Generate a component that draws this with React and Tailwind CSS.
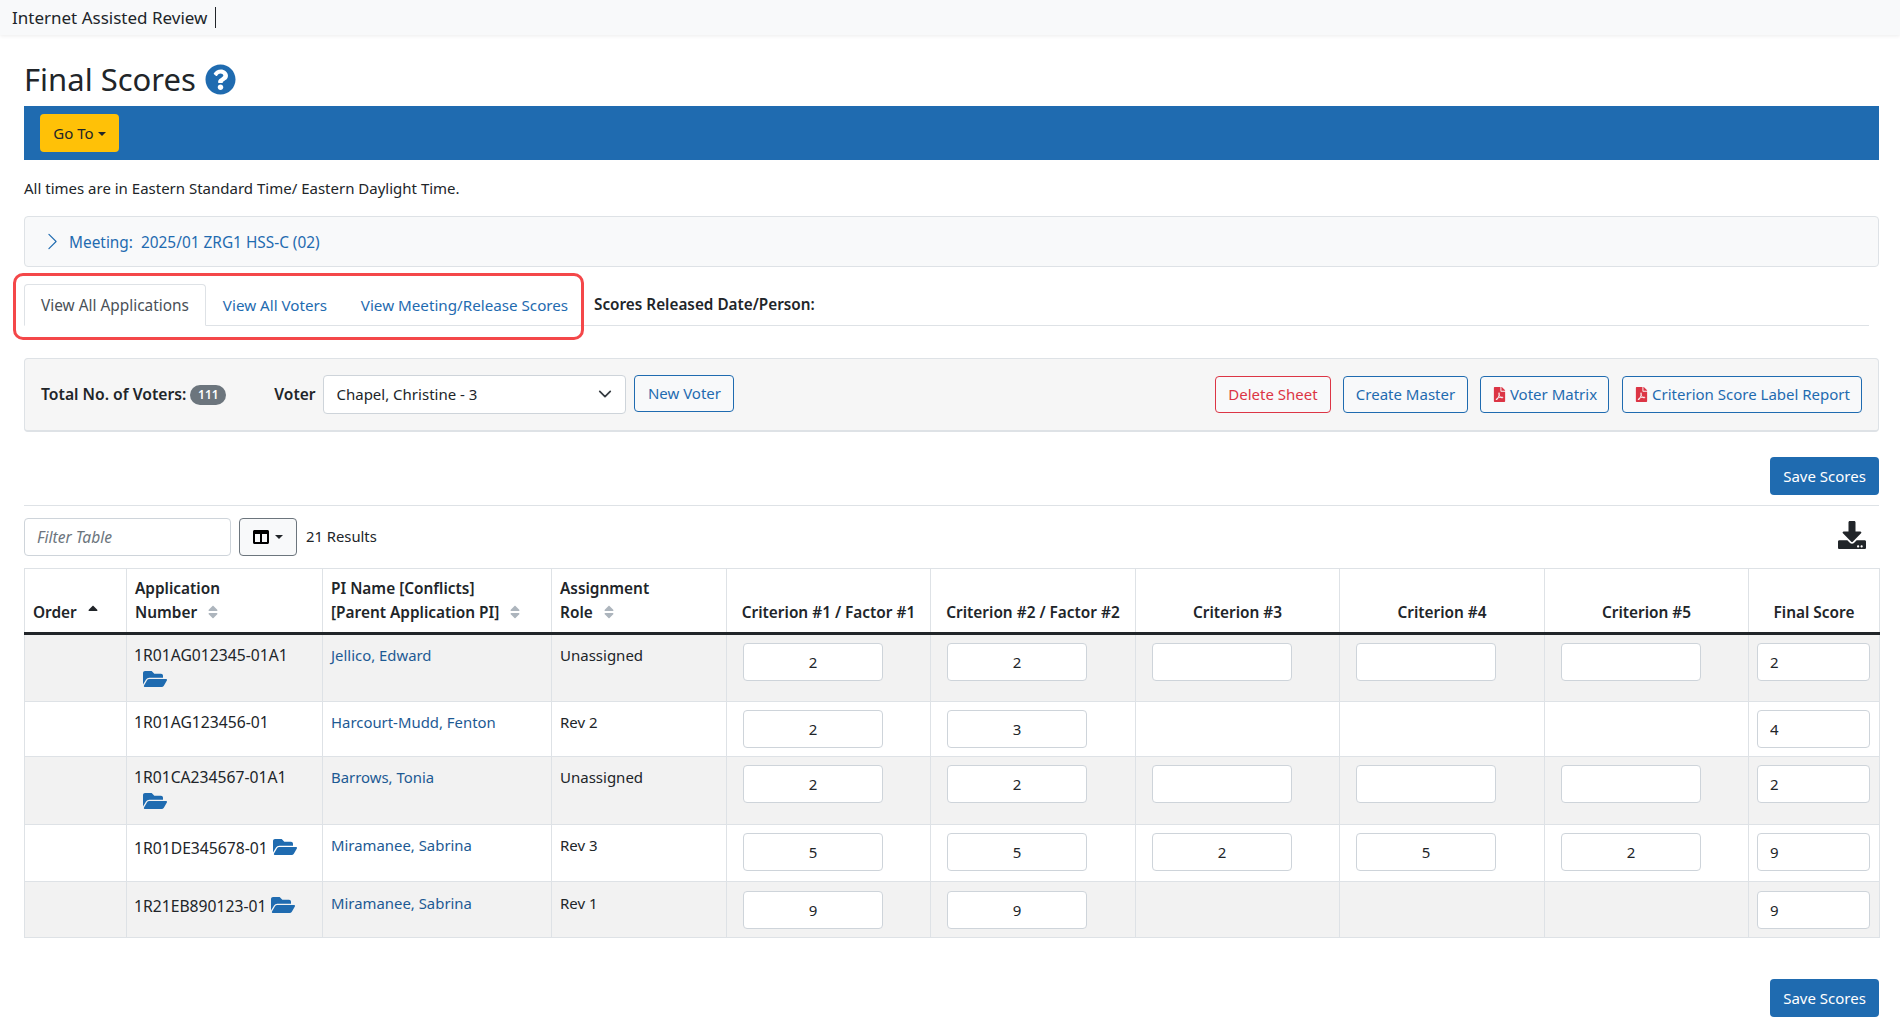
import React from 'react'
import { FaFolderOpen, FaFilePdf, FaQuestionCircle, FaColumns, FaDownload, FaSort, FaSortUp } from 'react-icons/fa'

const widths = [102, 196, 229, 175, 204, 205, 204, 205, 204, 131]

const rows = [
  { app: '1R01AG012345-01A1', folder: 'below', pi: 'Jellico, Edward', role: 'Unassigned', scores: ['2', '2', '', '', ''], final: '2', h: 'h-[68px]', inputs: 5 },
  { app: '1R01AG123456-01', pi: 'Harcourt-Mudd, Fenton', role: 'Rev 2', scores: ['2', '3'], final: '4', h: 'h-[55px]', inputs: 2 },
  { app: '1R01CA234567-01A1', folder: 'below', pi: 'Barrows, Tonia', role: 'Unassigned', scores: ['2', '2', '', '', ''], final: '2', h: 'h-[68px]', inputs: 5 },
  { app: '1R01DE345678-01', folder: 'inline', pi: 'Miramanee, Sabrina', role: 'Rev 3', scores: ['5', '5', '2', '5', '2'], final: '9', h: 'h-[57px]', inputs: 5 },
  { app: '1R21EB890123-01', folder: 'inline', pi: 'Miramanee, Sabrina', role: 'Rev 1', scores: ['9', '9'], final: '9', h: 'h-[56px]', inputs: 2, last: true },
]

function Caret() {
  return <span className="inline-block w-0 h-0 ml-1 align-[3px] border-x-[4px] border-x-transparent border-t-[4px] border-t-current" />
}

function OutlineBtn({ children, className = '' }) {
  return (
    <button className={`h-[37px] border border-[#1f6bb0] rounded text-[#1f6bb0] bg-[#f8f9fa] text-[15px] whitespace-nowrap flex items-center justify-center ${className}`}>
      {children}
    </button>
  )
}

function SaveBtn() {
  return (
    <div className="flex justify-end">
      <button className="w-[109px] h-[38px] rounded bg-[#1f6bb0] text-white text-[15px]">Save Scores</button>
    </div>
  )
}

function Th({ children, sort, center }) {
  return (
    <th className={`border-x border-t border-[#dee2e6] align-bottom px-2 pb-[7px] font-semibold text-[15.4px] leading-[24px] text-[#212529] ${center ? 'text-center' : 'text-left'}`}>
      {children}
      {sort === 'up' && <FaSortUp className="inline ml-2 text-[16px] text-[#212529] align-[-2px]" />}
      {sort === 'both' && <FaSort className="inline ml-2 text-[16px] text-[#adb5bd] align-[-2px]" />}
    </th>
  )
}

function ScoreInput({ value, left }) {
  return (
    <input
      readOnly
      value={value}
      className={`block h-[38px] border border-[#ced4da] rounded bg-white text-[15px] text-[#212529] ${left ? 'w-[113px] px-3 ml-auto text-left' : 'w-[140px] ml-4 text-center'}`}
    />
  )
}

export default function App() {
  return (
    <div className="relative min-h-[1029px] bg-white text-[#212529] text-[15px] font-['Noto_Sans','Open_Sans','Liberation_Sans',sans-serif]">
      <header className="h-[35px] bg-[#f8f9fa] shadow-[0_1px_4px_rgba(0,0,0,0.08)] pl-3 flex items-center text-[17px]">
        <span>Internet Assisted Review</span>
        <span className="ml-2 w-px h-[21px] bg-[#212529]" />
      </header>

      <main className="pl-6 pr-[21px]">
        <h1 className="mt-[20px] h-[51px] pb-[2px] flex items-center gap-[9px] text-[31px] font-normal">
          Final Scores
          <FaQuestionCircle className="text-[#1f6bb0] text-[31px]" />
        </h1>

        <div className="h-[54px] bg-[#1f6bb0] flex items-center pl-4">
          <button className="w-[79px] h-[38px] rounded bg-[#ffc107] text-[#212529] text-[15px]">
            Go To<Caret />
          </button>
        </div>

        <p className="mt-[18px] h-[21px] leading-[21px] text-[15px]">All times are in Eastern Standard Time/ Eastern Daylight Time.</p>

        <div className="mt-[17px] h-[51px] bg-[#f8f9fa] border border-[#dee2e6] rounded flex items-center pl-[18px] pt-[2px] text-[#1f6bb0] text-[15.4px]">
          <svg viewBox="0 0 16 16" className="w-[19px] h-[19px] mr-[7px] -mt-[2px]" fill="currentColor">
            <path fillRule="evenodd" d="M4.646 1.646a.5.5 0 0 1 .708 0l6 6a.5.5 0 0 1 0 .708l-6 6a.5.5 0 0 1-.708-.708L10.293 8 4.646 2.354a.5.5 0 0 1 0-.708z" />
          </svg>
          <span>Meeting:&nbsp; 2025/01 ZRG1 HSS-C (02)</span>
        </div>

        <div className="mt-[17px] mr-[10px] h-[42px] border-b border-[#dee2e6] flex items-end text-[15.4px]">
          <div className="w-[182px] h-[42px] -mb-px pt-[1px] bg-white border border-[#dee2e6] border-b-white rounded-t flex items-center justify-center text-[#495057]">View All Applications</div>
          <div className="w-[138px] h-[41px] pt-[2px] flex items-center justify-center text-[#1f6bb0] text-[15.2px]">View All Voters</div>
          <div className="w-[241px] h-[41px] pt-[2px] flex items-center justify-center text-[#1f6bb0] text-[15.2px] whitespace-nowrap">View Meeting/Release Scores</div>
          <div className="ml-[9px] h-[41px] flex items-center font-semibold text-[15.3px]">Scores Released Date/Person:</div>
        </div>

        <div className="mt-[32px] h-[74px] bg-[#f6f6f6] border border-[#dee2e6] border-b-2 rounded flex items-center pl-4 pr-4">
          <span className="font-semibold text-[15.7px]">Total No. of Voters:</span>
          <span className="ml-[4px] w-[36px] h-[20px] rounded-full bg-[#6c757d] text-white text-[12px] font-semibold flex items-center justify-center">111</span>
          <span className="ml-[48px] font-semibold text-[15.5px]">Voter</span>
          <div className="relative ml-2 w-[303px] h-[39px]">
            <select className="appearance-none w-full h-full bg-white border border-[#ced4da] rounded pl-3 text-[15px]">
              <option>Chapel, Christine - 3</option>
            </select>
            <svg viewBox="0 0 16 16" className="absolute right-[14px] top-[12px] w-[14px] h-[14px]" fill="none" stroke="#343a40" strokeWidth="2" strokeLinecap="round" strokeLinejoin="round">
              <path d="M2 5l6 6 6-6" />
            </svg>
          </div>
          <OutlineBtn className="ml-2 mb-[2px] w-[100px]">New Voter</OutlineBtn>
          <div className="ml-auto flex items-center">
            <button className="w-[116px] h-[37px] border border-[#dc3545] rounded text-[#dc3545] bg-[#f8f9fa] text-[15px]">Delete Sheet</button>
            <OutlineBtn className="ml-3 w-[125px]">Create Master</OutlineBtn>
            <OutlineBtn className="ml-3 w-[129px]">
              <FaFilePdf className="text-[#dc3545] text-[15px] mr-[3px]" />Voter Matrix
            </OutlineBtn>
            <OutlineBtn className="ml-[13px] w-[240px]">
              <FaFilePdf className="text-[#dc3545] text-[15px] mr-[3px]" />Criterion Score Label Report
            </OutlineBtn>
          </div>
        </div>

        <div className="mt-[25px]"><SaveBtn /></div>

        <div className="mt-[10px] border-t border-[#dee2e6] pt-[12px] h-[63px] flex items-start">
          <input readOnly placeholder="Filter Table" className="w-[207px] h-[38px] border border-[#ced4da] rounded px-3 text-[15.6px] italic placeholder:text-[#6c757d]" />
          <button className="ml-2 w-[58px] h-[38px] border border-[#6c757d] rounded bg-[#f8f9fa] flex items-center justify-center">
            <FaColumns className="text-[16px] text-black mr-[2px]" /><Caret />
          </button>
          <span className="ml-[9px] h-[36px] flex items-center text-[14.8px]">21 Results</span>
          <FaDownload className="ml-auto mr-[13px] mt-[3px] text-[28px] text-[#212529]" />
        </div>

        <table className="table-fixed border-collapse w-[1855px]">
          <colgroup>
            {widths.map((w, i) => <col key={i} style={{ width: w }} />)}
          </colgroup>
          <thead>
            <tr className="h-[65px] border-b-[3px] border-[#212529]">
              <Th sort="up">Order</Th>
              <Th sort="both">Application<br />Number</Th>
              <Th sort="both">PI Name [Conflicts]<br />[Parent Application PI]</Th>
              <Th sort="both">Assignment<br />Role</Th>
              <Th center>Criterion #1 / Factor #1</Th>
              <Th center>Criterion #2 / Factor #2</Th>
              <Th center>Criterion #3</Th>
              <Th center>Criterion #4</Th>
              <Th center>Criterion #5</Th>
              <Th center>Final Score</Th>
            </tr>
          </thead>
          <tbody>
            {rows.map((r, i) => (
              <tr key={r.app} className={`${r.h} ${i % 2 === 0 ? 'bg-[#f2f2f2]' : 'bg-white'}`}>
                <td className="border border-[#dee2e6]" />
                <td className={`border border-[#dee2e6] align-top pl-[7px] ${r.last ? 'pt-[11px]' : 'pt-[10px]'} text-[15.7px] leading-[21px] whitespace-nowrap`}>
                  {r.app}
                  {r.folder === 'inline' && <FaFolderOpen className="inline ml-[5px] text-[24px] text-[#1f6bb0] align-[-5px]" />}
                  {r.folder === 'below' && <FaFolderOpen className="block ml-[9px] mt-[1px] text-[24px] text-[#1f6bb0]" />}
                </td>
                <td className={`border border-[#dee2e6] align-top px-2 ${r.last ? 'pt-[11px]' : 'pt-[10px]'} text-[14.9px] leading-[21px] text-[#1d5a94]`}>{r.pi}</td>
                <td className={`border border-[#dee2e6] align-top px-2 ${r.last ? 'pt-[11px]' : 'pt-[10px]'} text-[15px] leading-[21px]`}>{r.role}</td>
                {[0, 1, 2, 3, 4].map((c) => (
                  <td key={c} className={`border border-[#dee2e6] align-top ${r.last ? 'pt-[9px]' : 'pt-[8px]'}`}>
                    {c < r.inputs && <ScoreInput value={r.scores[c]} />}
                  </td>
                ))}
                <td className={`border border-[#dee2e6] align-top pr-[9px] ${r.last ? 'pt-[9px]' : 'pt-[8px]'}`}>
                  <ScoreInput value={r.final} left />
                </td>
              </tr>
            ))}
          </tbody>
        </table>

        <div className="mt-[41px]"><SaveBtn /></div>
      </main>

      <div className="absolute left-[13px] top-[273px] w-[571px] h-[67px] border-[3px] border-[#f44749] rounded-[10px] pointer-events-none" />
    </div>
  )
}
